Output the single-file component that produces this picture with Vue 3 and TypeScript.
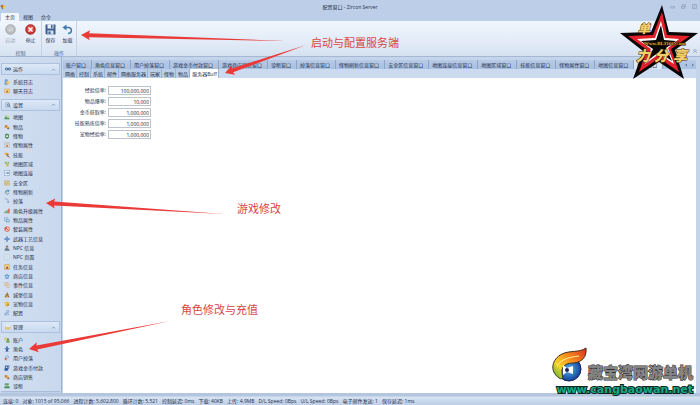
<script setup lang="ts">
import { ref } from 'vue'

interface Shape { d: string; fill?: string; stroke?: string; w?: number }
interface NavItem { label: string; icon: Shape[] }
interface NavGroup { title: string; icon: Shape[]; items: NavItem[] }

const f = (d: string, fill: string): Shape => ({ d, fill })
const s = (d: string, stroke: string, w = 2): Shape => ({ d, stroke, w })

/* Every glyph is drawn on a 16 by 16 grid. */
const groups: NavGroup[] = [
  {
    title: '运作',
    icon: [s('M1 8a3 3 0 1 0 6 0a3 3 0 1 0-6 0M9 8a3 3 0 1 0 6 0a3 3 0 1 0-6 0M6 8h4', '#35598f', 2.4)],
    items: [
      { label: '系统日志', icon: [f('M2 1h8v10H2z', '#6f9fd4'), f('M6 6h9v8H6z', '#f0c768'), f('M1 12h8v3H1z', '#5d83b5')] },
      { label: '聊天日志', icon: [f('M1 2h14v12H1z', '#e0a24a'), f('M3 4h10v8H3z', '#fae3a8'), f('M5 11l3-6 4 6z', '#b05a28')] },
    ],
  },
  {
    title: '设置',
    icon: [s('M2 2h9v11H2z', '#7d91ac', 1.5), s('M6 8a3 3 0 1 0 6 0a3 3 0 1 0-6 0M11 11l4 4', '#597395', 2)],
    items: [
      { label: '地图', icon: [f('M1 3h14v11H1z', '#b7d3c3'), f('M1 12l5-6 4 5 2-2 3 4v1H1z', '#4f9c62'), f('M10 4h3v3h-3z', '#f6e58d')] },
      { label: '物品', icon: [f('M2 3h7v7H2z', '#d27e36'), f('M5 9l5-4 5 4-5 5z', '#e8b13d'), f('M9 10h5v4H9z', '#8c6f62')] },
      { label: '怪物', icon: [f('M3 5l3-3h4l3 3v7l-4 3H7l-4-3z', '#3e8149'), f('M5 6h6v5H5z', '#d4ecc4'), s('M2 4l3 2M14 4l-3 2', '#3e8149', 1.5)] },
      { label: '怪物属性', icon: [f('M2 1h12v14H2z', '#efe9de'), s('M2 1h12v14H2zM4 4h8M4 7h8', '#8893a5', 1), f('M6 8h5v5H6z', '#d07940')] },
      { label: '技能', icon: [f('M2 2h7v6H2z', '#eab13a'), f('M7 4h5v8H7z', '#ce7228'), s('M9 9l6 6', '#59719a', 2.5)] },
      { label: '地图区域', icon: [f('M2 2h5v5H2zM9 2h5v5H9z', '#8fba62'), f('M5 8h7v7H5z', '#d8c35c'), s('M3 5l10 7', '#7d9366', 1)] },
      { label: '地图连接', icon: [f('M1 1h14v14H1z', '#e9f1fa'), s('M1 1h14v14H1z', '#7894bd', 1.5), s('M4 8h8M9 5l3 3-3 3', '#3a6dae', 2)] },
      { label: '安全区', icon: [f('M1 2h14v12H1z', '#e3d6a2'), s('M1 2h14v12H1zM5 2v12M10 2v12M1 6h14M1 10h14', '#ad9e73', 1)] },
      { label: '怪物刷新', icon: [s('M13 6a5 5 0 1 0 0 5M13 2v4H9', '#4e86bc', 2.5), f('M6 2l5 3-4 3z', '#72b55b'), f('M6 8h4v4H6z', '#d9dc70')] },
      { label: '掉落', icon: [s('M2 3c6-2 10 0 9 9M8 9l3 4 3-4', '#7590b5', 1.8)] },
      { label: '角色升级属性', icon: [f('M1 9h4v5H1z', '#79a05a'), f('M6 6h4v8H6z', '#529e68'), f('M11 2h4v12h-4z', '#d2664b')] },
      { label: '物品属性', icon: [f('M1 1h9v9H1z', '#b8d3ee'), s('M1 1h9v9H1z', '#6590bd', 1), f('M5 6h10v8H5z', '#74acc8'), f('M7 8h6v2H7z', '#eef7fa')] },
      { label: '套装属性', icon: [f('M8 1a7 7 0 1 0 0 14a7 7 0 0 0 0-14z', '#d85e4a'), f('M8 3a5 5 0 1 1-4 8z', '#f4d7c9'), s('M5 5l6 6', '#b03e32', 2)] },
      { label: '武器工艺信息', icon: [f('M6 1h4v5h5v4h-5v5H6v-5H1V6h5z', '#4e7ec4'), f('M7 4h2v8H7z', '#8fb2e0')] },
      { label: 'NPC 信息', icon: [f('M5 2h6v6H5z', '#5a4a48'), f('M6 4h4v5H6z', '#e4b58c'), f('M2 10l5-2 6 2 2 5H2z', '#6f7787')] },
      { label: 'NPC 页面', icon: [f('M2 1h12v14H2z', '#e7edf5'), s('M2 1h12v14H2zM5 5h6M5 8h6M5 11h6', '#a5b6cc', 1)] },
      { label: '任务信息', icon: [f('M1 1h14v14H1z', '#e09b3b'), f('M3 3h10v9H3z', '#f8d98c'), f('M5 12l3-7 4 7z', '#7b4524')] },
      { label: '商店信息', icon: [f('M8 1l2 4 5 1-3 4v5H4v-5L1 6l5-1z', '#5190d6'), f('M6 7h4v5H6z', '#cfe3f7')] },
      { label: '事件信息', icon: [f('M2 1h8v8H2z', '#ecd9b6'), s('M2 1h8v8H2z', '#b58f69', 1), f('M7 6h7v8H7z', '#e6dcc8'), s('M7 6h7v8H7z', '#c08c66', 1)] },
      { label: '城堡信息', icon: [f('M7 1h3v4h2v4l3 5H1l3-5V6h3z', '#9a6a2b'), f('M6 9h4v5H6z', '#e3b348')] },
      { label: '宠物信息', icon: [f('M1 3l4 1 3-2 6 2v6l-5 5-6-3z', '#e5b32c'), f('M4 6h3v3H4z', '#fff0a4'), f('M9 9h4v3H9z', '#8f6e28')] },
      { label: '配置', icon: [s('M7 4a3 3 0 1 0 6 0a3 3 0 1 0-6 0M2 11a3 3 0 1 0 6 0a3 3 0 1 0-6 0M8 7l-2 2M10 12h4', '#6f97c8', 2)] },
    ],
  },
  {
    title: '管理',
    icon: [f('M1 7h13v7H1z', '#d8a748'), f('M3 3h9v6H3z', '#e9eef5'), f('M1 10h13v2H1z', '#f6dd96')],
    items: [
      { label: '账户', icon: [f('M1 1h6v8H1z', '#d9c878'), f('M8 4h5v4H8z', '#57824a'), f('M6 9h9v6H6z', '#6ba24b')] },
      { label: '角色', icon: [f('M6 1h4v4H6zM2 6h12v2l-4 1 2 6H9l-1-3-1 3H4l2-6-4-1z', '#315f9f')] },
      { label: '用户掉落', icon: [s('M4 13V4c5-5 11 0 7 4H7', '#709bcc', 2), f('M2 8h5v6H2z', '#c66d59')] },
      { label: '游戏金币付款', icon: [f('M3 1h11v7l-5 7H1z', '#315b9f'), f('M5 4h3v4H5zM10 4h2v5h-2z', '#e4edf7')] },
      { label: '商店销售', icon: [f('M2 3h7v7H2z', '#d27e36'), f('M5 9l5-4 5 4-5 5z', '#e8b13d'), f('M9 10h5v4H9z', '#8c6f62')] },
      { label: '诊断', icon: [f('M2 1h11v4H2z', '#51955b'), f('M4 5h7v4H4z', '#9bc36d'), f('M1 9h14v5H1z', '#458b59')] },
    ],
  },
]

const ribbonTabs = ['主页', '视图', '命令']
const documentTabs = [
  '账户窗口', '角色信息窗口', '用户掉落窗口', '游戏金币付款窗口', '游戏商店销售窗口', '诊断窗口',
  '掉落信息窗口', '怪物刷新信息窗口', '安全区信息窗口', '地图连接信息窗口', '地图区域窗口',
  '技能信息窗口', '怪物属性窗口', '地图信息窗口', '配置窗口',
]
const configTabs = ['网络', '控制', '系统', '邮件', '网络服务器', '玩家', '怪物', '物品', '服务器Buff']
const activeDocument = ref('配置窗口')
const activeConfig = ref('服务器Buff')

const fields = ref([
  { id: 'exp', label: '经验倍率:', value: '100,000,000' },
  { id: 'drop', label: '物品爆率:', value: '10,000' },
  { id: 'gold', label: '金币获取率:', value: '1,000,000' },
  { id: 'skill', label: '技能熟练倍率:', value: '1,000,000' },
  { id: 'pet', label: '宠物经验率:', value: '1,000,000' },
])

const status = [
  '连接: 0', '对象: 1015 of 95,066', '进程计数: 5,602,800', '循环计数: 5,521', '控制延迟: 0ms',
  '下载: 40KB', '上传: 4.9MB', 'D/L Speed: 0Bps', 'U/L Speed: 0Bps', '电子邮件发送: 1', '保存延迟: 1ms',
]

/* Tapered arrow polygon running from a thin tail to a wide head. */
function arrow(tx: number, ty: number, ex: number, ey: number): string {
  const len = Math.hypot(ex - tx, ey - ty)
  const ux = (ex - tx) / len
  const uy = (ey - ty) / len
  const at = (along: number, side: number) =>
    `${(tx + ux * along - uy * side).toFixed(1)},${(ty + uy * along + ux * side).toFixed(1)}`
  return [at(0, 0), at(9, 5), at(8, 2), at(len, 0), at(8, -2), at(9, -5)].join(' ')
}
const arrows = [
  arrow(81, 35, 286, 41),
  arrow(225, 73, 306, 45),
  arrow(46, 203, 224, 214),
  arrow(29, 349, 170, 321),
]
</script>

<template>
  <div class="window">
    <header class="titlebar">
      <svg class="app-icon" viewBox="0 0 16 16"><path d="M1 5l5-4 4 5-4 5z" fill="#b65a35" /><path d="M7 5l8-3-2 9-5 3z" fill="#e9c544" /><path d="M3 9l5 1-1 5z" fill="#596f91" /></svg>
      <h1>配置窗口 - Zircon Server</h1>
      <div class="window-buttons">
        <button aria-label="最小化"><svg viewBox="0 0 10 10"><path d="M1 5h8v3H1z" /></svg></button>
        <button aria-label="还原"><svg viewBox="0 0 10 10"><path d="M3 1h6v5H3zM1 4h6v5H1z" /></svg></button>
        <button aria-label="关闭"><svg viewBox="0 0 10 10"><path d="M1 1h8v8H1zM3 3l4 4M7 3l-4 4" /></svg></button>
      </div>
    </header>

    <nav class="ribbon-tabs">
      <button v-for="(t, i) in ribbonTabs" :key="t" :class="{ active: i === 0 }">{{ t }}</button>
    </nav>

    <section class="ribbon">
      <div class="ribbon-group">
        <div class="tools">
          <button class="tool disabled">
            <svg viewBox="0 0 22 22"><circle cx="11" cy="11" r="10" fill="#b4b6ba" stroke="#a2a5aa" /><circle cx="11" cy="10" r="7" fill="#c3c5c8" /><path d="M7 11l3 3 5-6" fill="none" stroke="#e2e4e6" stroke-width="2" /></svg>
            <span>启动</span>
          </button>
          <button class="tool">
            <svg viewBox="0 0 22 22"><circle cx="11" cy="11" r="10" fill="#bd2e2b" stroke="#97302f" /><circle cx="11" cy="10" r="7" fill="#db5149" /><path d="M7 7l8 8M15 7l-8 8" stroke="#fff" stroke-width="3" /></svg>
            <span>停止</span>
          </button>
        </div>
        <p>控制</p>
      </div>
      <div class="ribbon-group second">
        <div class="tools">
          <button class="tool">
            <svg viewBox="0 0 22 22"><path d="M1 1h20v20H3l-2-2z" fill="#3f5f91" /><path d="M5 1h12v8H5z" fill="#e8eef6" /><path d="M12 2h3v6h-3z" fill="#3f5f91" /><path d="M5 13h12v8H5z" fill="#cfdcec" /><path d="M7 15h4v5H7z" fill="#3f5f91" /></svg>
            <span>保存</span>
          </button>
          <button class="tool">
            <svg viewBox="0 0 22 22"><path d="M5 7h8c8 0 8 12-1 12" fill="none" stroke="#4277ad" stroke-width="3" /><path d="M1 7l8-6v12z" fill="#4277ad" /></svg>
            <span>加载</span>
          </button>
        </div>
        <p>操作</p>
      </div>
      <button class="collapse" aria-label="折叠功能区"><svg viewBox="0 0 10 10"><path d="M2 5l3-3 3 3M2 8l3-3 3 3" /></svg></button>
    </section>

    <div class="body">
      <aside class="sidebar">
        <section v-for="g in groups" :key="g.title" class="nav-group" :style="{ flexGrow: g.items.length }">
          <button class="nav-head">
            <svg class="icon" viewBox="0 0 16 16"><path v-for="(p, i) in g.icon" :key="i" :d="p.d" :fill="p.fill ?? 'none'" :stroke="p.stroke" :stroke-width="p.w" /></svg>
            <span>{{ g.title }}</span>
            <svg class="chevron" viewBox="0 0 10 10"><path d="M2 7l3-3 3 3" /></svg>
          </button>
          <ul>
            <li v-for="item in g.items" :key="item.label">
              <a href="#">
                <svg class="icon" viewBox="0 0 16 16"><path v-for="(p, i) in item.icon" :key="i" :d="p.d" :fill="p.fill ?? 'none'" :stroke="p.stroke" :stroke-width="p.w" /></svg>
                <span>{{ item.label }}</span>
              </a>
            </li>
          </ul>
        </section>
        <div class="more"></div>
      </aside>

      <main class="workspace">
        <div class="doc-row">
          <nav class="doc-tabs" role="tablist">
            <button v-for="t in documentTabs" :key="t" role="tab" :class="{ active: t === activeDocument }" @click="activeDocument = t">{{ t }}</button>
          </nav>
          <button class="scroll" aria-label="向左"><svg viewBox="0 0 10 10"><path d="M7 1L3 5l4 4z" /></svg></button>
          <button class="scroll" aria-label="向右"><svg viewBox="0 0 10 10"><path d="M3 1l4 4-4 4z" /></svg></button>
        </div>
        <nav class="config-tabs" role="tablist">
          <button v-for="t in configTabs" :key="t" role="tab" :class="{ active: t === activeConfig }" @click="activeConfig = t">{{ t }}</button>
        </nav>
        <form class="panel" @submit.prevent>
          <template v-for="field in fields" :key="field.id">
            <label :for="field.id">{{ field.label }}</label>
            <input :id="field.id" v-model="field.value" type="text" />
          </template>
        </form>
      </main>
    </div>

    <footer class="statusbar">
      <span v-for="item in status" :key="item">{{ item }}</span>
    </footer>

    <svg class="arrows"><polygon v-for="a in arrows" :key="a" :points="a" /></svg>
    <p class="note note-server">启动与配置服务端</p>
    <p class="note note-game">游戏修改</p>
    <p class="note note-role">角色修改与充值</p>

    <svg class="star" viewBox="0 0 82 76">
      <polygon points="44,1 51,28 80,29 57,46 66,75 41,58 15,75 25,47 2,29 33,28" fill="#090607" />
      <polygon points="44,8 49,31 72,32 53,45 61,68 41,54 21,68 29,46 10,32 35,31" fill="#e5202d" />
      <polygon points="43,17 47,34 61,35 50,44 56,60 41,50 27,60 33,45 19,35 37,34" fill="#fff" />
      <polygon points="43,21 46,36 58,37 48,44 54,57 41,48 29,57 35,45 23,37 38,36" fill="#090607" />
      <g class="gold">
        <text x="20" y="29" font-size="12">单</text>
        <text x="18" y="57" font-size="14">力</text>
        <text x="36" y="57" font-size="14">分</text>
        <text x="55" y="57" font-size="14">享</text>
      </g>
      <text class="star-url" x="26" y="41">Www.BL3166.Com</text>
    </svg>

    <div class="brand">
      <div class="brand-top">
        <svg viewBox="0 0 36 36">
          <defs>
            <linearGradient id="flame" x1="0" y1="1" x2="1" y2="0"><stop offset="0" stop-color="#39a83d" /><stop offset=".3" stop-color="#f6d52b" /><stop offset=".6" stop-color="#f38a1c" /><stop offset="1" stop-color="#dc2d20" /></linearGradient>
            <radialGradient id="orb"><stop offset="0" stop-color="#53b5ee" /><stop offset="1" stop-color="#123f9b" /></radialGradient>
          </defs>
          <circle cx="17" cy="22" r="12" fill="url(#orb)" stroke="#142452" />
          <path d="M7 31C-3 24 0 12 10 7c8-4 17-1 24-6 1 9-4 14-12 15-7 0-11 2-12 7 0 3 0 5 1 8-2 1-3 1-4 0z" fill="url(#flame)" stroke="#41301c" />
          <path d="M5 19c4-7 13-9 22-10" fill="none" stroke="#fff09a" stroke-width="1" />
          <path d="M11 18l4 3 6-2v8l-6-2-4 3z" fill="#fff" /><circle cx="15" cy="23" r="2" fill="#142452" />
        </svg>
        <strong>藏宝湾网游单机</strong>
      </div>
      <a href="#">www.cangbaowan.net</a>
    </div>
  </div>
</template>

<style>
body { margin: 0; }
</style>

<style scoped>
.window {
  position: relative;
  display: flex;
  flex-direction: column;
  height: 100vh;
  overflow: hidden;
  background: #c3d4eb;
  color: #1f2f4b;
  font-family: "Open Sans", "Noto Sans CJK SC", sans-serif;
  font-size: 5px;
  line-height: 8px;
}
.window * { box-sizing: border-box; }
button {
  padding: 0;
  border: 0;
  background: none;
  color: inherit;
  font: inherit;
  white-space: nowrap;
}
a { color: inherit; text-decoration: none; }
p, h1, ul { margin: 0; padding: 0; }
ul { list-style: none; }
svg { display: block; flex: none; }

.titlebar {
  display: grid;
  grid-template-columns: 1fr auto 1fr;
  align-items: center;
  height: 13px;
  background: #bdcfe8;
}
.titlebar h1 { font: inherit; }
.app-icon { width: 6px; height: 6px; }
.window-buttons { display: flex; justify-content: flex-end; gap: 6px; padding-right: 3px; }
.window-buttons svg { width: 5px; height: 5px; fill: none; stroke: #8292aa; }

.ribbon-tabs { display: flex; height: 8px; background: #bdcfe8; padding-left: 1px; }
.ribbon-tabs button { width: 18px; }
.ribbon-tabs .active { background: #f2f7fd; border-radius: 1px 1px 0 0; }

.ribbon {
  display: flex;
  height: 36px;
  background: linear-gradient(#f0f6fd, #e2ebf7 60%, #d6e2f1);
  border-bottom: 1px solid #a5b8d3;
}
.ribbon-group {
  display: flex;
  flex-direction: column;
  justify-content: space-between;
  width: 42px;
  padding-top: 3px;
  border-right: 1px solid #c5d2e4;
}
.ribbon-group.second { width: 35px; }
.ribbon-group p { text-align: center; color: #50617d; line-height: 6px; }
.tools { display: flex; justify-content: space-around; }
.tool { display: flex; flex-direction: column; align-items: center; gap: 1px; }
.tool svg { width: 11px; height: 11px; }
.tool.disabled { color: #9da5b1; }
.collapse { margin-left: auto; align-self: flex-end; padding: 0 2px 2px 0; }
.collapse svg { width: 6px; height: 6px; fill: none; stroke: #6f82a0; }

.body { display: flex; flex: 1; min-height: 0; }
.sidebar {
  display: flex;
  flex-direction: column;
  width: 62px;
  padding: 6px 1px 0;
  background: linear-gradient(90deg, #d1dff1, #c9d8ed);
  border-right: 1px solid #9fb2ce;
}
.nav-group { display: flex; flex-direction: column; flex-basis: 17px; min-height: 0; }
.nav-group:nth-last-child(2) { flex-basis: 14px; }
.nav-head {
  display: flex;
  align-items: center;
  flex: none;
  gap: 2px;
  height: 12px;
  padding: 0 3px;
  border: 1px solid #adc1df;
  background: linear-gradient(#dce8f7, #c8d9f0);
}
.nav-head .chevron { width: 5px; height: 5px; margin-left: auto; fill: none; stroke: #46618c; }
.icon { width: 6px; height: 6px; }
.nav-group ul {
  display: flex;
  flex-direction: column;
  flex: 1;
  min-height: 0;
  padding: 2px 0 3px 3px;
}
.nav-group:nth-last-child(2) ul { padding-bottom: 0; }
.nav-group li { display: flex; flex: 1; min-height: 0; align-items: center; }
.nav-group a { display: flex; align-items: center; gap: 3px; white-space: nowrap; }
.more { height: 2px; border-top: 1px solid #a9bcd8; background: #bfd1ea; }

.workspace { display: flex; flex-direction: column; flex: 1; min-width: 0; padding: 3px 4px 0 1px; }
.doc-row { display: flex; height: 9px; background: linear-gradient(#b7cae6, #a9c0e0); }
.doc-tabs { display: flex; flex: 1; min-width: 0; overflow: hidden; }
.doc-tabs button { flex: none; padding: 0 5px 0 3px; border-right: 1px solid #8ca5c8; }
.doc-tabs .active { background: #dce8f6; }
.scroll { width: 7px; }
.scroll svg { width: 4px; height: 4px; margin: auto; fill: #546f99; }
.config-tabs { display: flex; height: 9px; background: #cbdaee; }
.config-tabs button { padding: 0 1px 0 2px; border-right: 1px solid #9cb2d0; background: #bccfe9; }
.config-tabs .active { background: #fff; }

.panel {
  display: grid;
  grid-template-columns: 43px 43px;
  grid-auto-rows: 9px;
  align-content: start;
  row-gap: 2px;
  column-gap: 2px;
  flex: 1;
  padding-top: 8px;
  background: #fff;
}
.panel label { text-align: right; line-height: 9px; white-space: nowrap; }
.panel input {
  width: 100%;
  min-width: 0;
  height: 9px;
  padding: 0 1px;
  border: 1px solid #bcc3cd;
  background: #fff;
  color: #222;
  font: inherit;
  text-align: right;
}

.statusbar {
  display: flex;
  align-items: center;
  gap: 4px;
  height: 12px;
  padding: 4px 3px 0;
  background: linear-gradient(#b4c6de 0 3px, #d7e3f3 4px, #bdcee7);
  white-space: nowrap;
}

.arrows { position: absolute; inset: 0; width: 100%; height: 100%; pointer-events: none; fill: #ea3a37; }
.note { position: absolute; color: #dc4444; font-family: "Noto Sans CJK SC", sans-serif; font-size: 11px; line-height: 16px; }
.note-server { left: 311px; top: 34px; }
.note-game { left: 237px; top: 200px; }
.note-role { left: 181px; top: 301px; }

.star { position: absolute; top: 4px; right: 0; width: 82px; height: 76px; }
.gold { fill: #f4d06a; stroke: #50300c; stroke-width: 1px; paint-order: stroke; font-family: "Noto Sans CJK SC", sans-serif; font-weight: 900; font-style: italic; }
.star-url { fill: #d9a52c; stroke: #2a1606; stroke-width: 1px; paint-order: stroke; font: bold 5px "Liberation Serif", serif; }

.brand { position: absolute; right: 7px; bottom: 8px; display: flex; flex-direction: column; align-items: flex-end; }
.brand-top { display: flex; align-items: flex-end; }
.brand-top svg { width: 36px; height: 36px; }
.brand strong {
  color: #858585;
  font-family: "Noto Sans CJK SC", sans-serif;
  font-size: 15px;
  font-weight: 900;
  line-height: 22px;
  -webkit-text-stroke: 1px #2e2e2e;
  paint-order: stroke;
}
.brand a {
  color: #18a987;
  font: bold 11px/14px "DejaVu Sans", sans-serif;
  -webkit-text-stroke: 2px #08231d;
  paint-order: stroke;
}
</style>
